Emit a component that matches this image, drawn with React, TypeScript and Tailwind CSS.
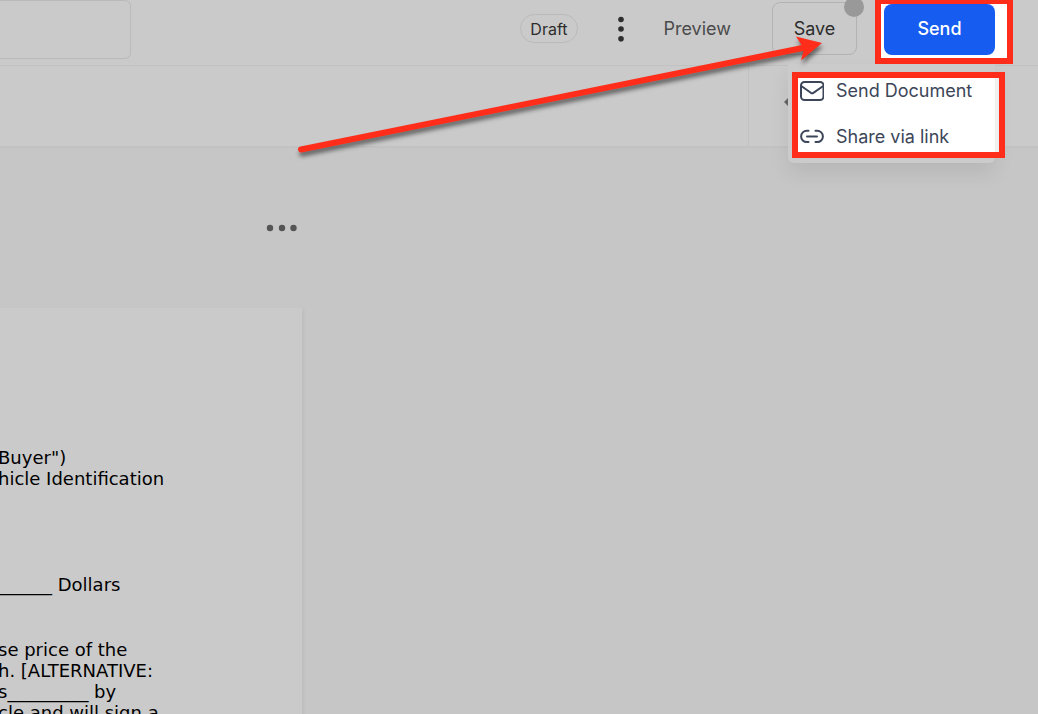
const clauses = [
  { lines: ['Buyer")', "hicle Identification"], spacing: "mb-[85px]" },
  { lines: ["______ Dollars"], spacing: "mb-11" },
  {
    lines: ["se price of the", "h. [ALTERNATIVE:", "s_________ by", "cle and will sign a"],
    spacing: "",
  },
];

function MailIcon() {
  return (
    <svg className="w-6 h-5 shrink-0" viewBox="0 0 24 20" fill="none" stroke="currentColor" strokeWidth="2" strokeLinecap="round" strokeLinejoin="round">
      <rect x="1" y="1" width="22.500" height="18" rx="3.500" />
      <path d="M2 5.500l8.800 6.300c.9.600 1.700.600 2.600 0L22.500 5.500" />
    </svg>
  );
}

function LinkIcon() {
  return (
    <svg className="w-6 h-5 shrink-0" viewBox="0 0 24 20" fill="none" stroke="currentColor" strokeWidth="2" strokeLinecap="round">
      <path d="M8.500 3.700H6.800a5.600 5.600 0 0 0 0 11.400H8.500M15.500 3.700h1.700a5.600 5.600 0 0 1 0 11.400H15.500M7 9.400h10" />
    </svg>
  );
}

const shareOptions = [
  { icon: MailIcon, label: "Send Document" },
  { icon: LinkIcon, label: "Share via link" },
];

function ShareMenu() {
  return (
    <div className="absolute right-[43px] top-16 w-[207px] pl-1 pt-2 pb-[5px] rounded-b-md bg-[#cbcbcb] shadow-[0_10px_20px_rgba(0,0,0,0.08)]">
      <div className="-mr-[10px] border-[6px] border-[#ff2d1a]">
        <ul className="flex flex-col gap-5 pl-0.5 pb-0.5 bg-white border-r-4 border-[#f0f0f0]">
          {shareOptions.map((option) => (
            <li key={option.label}>
              <button className="flex items-center gap-3 w-full h-[26px] text-lg text-[#3c4658] whitespace-nowrap">
                <option.icon />
                {option.label}
              </button>
            </li>
          ))}
        </ul>
      </div>
    </div>
  );
}

function Arrow() {
  return (
    <svg className="absolute right-[208px] top-[30px] w-[540px] h-[136px] pointer-events-none" viewBox="0 0 540 136" fill="#ff2d1a">
      <g className="drop-shadow-[1px_4px_2px_rgba(0,0,0,0.5)]">
        <path d="M11 119.500L515 17.500" stroke="#ff2d1a" strokeWidth="6" strokeLinecap="round" />
        <path d="M532 13L506 6.500L514 19L511 30.500z" />
      </g>
    </svg>
  );
}

export default function App() {
  return (
    <div className="relative flex flex-col min-h-screen overflow-hidden bg-[#c6c6c6] font-['Inter',sans-serif]">
      {/* Header */}
      <header className="flex items-start justify-between h-[66px] bg-[#cacaca] border-b border-[#c1c1c1]">
        <div className="w-[131px] h-[59px] rounded-r-md border border-l-0 border-[#bababa]" />
        <div className="flex items-start pr-[25px]">
          <div className="flex items-center h-[57px]">
            <span className="flex items-center h-[29px] px-[9px] rounded-full border border-[#bababa] text-base text-[#2d2d2d]">Draft</span>
            <button aria-label="More options" className="ml-[27px] text-[#2d2d2d]">
              <svg className="w-8 h-8" viewBox="0 0 32 32" fill="currentColor">
                <circle cx="16" cy="6.500" r="2.800" />
                <circle cx="16" cy="16" r="2.800" />
                <circle cx="16" cy="25.800" r="2.800" />
              </svg>
            </button>
            <button className="ml-[27px] text-lg text-[#4a4a4a]">Preview</button>
            <div className="relative ml-[41px]">
              <button className="block w-[85px] h-[53px] rounded-lg border border-[#b3b3b3] text-lg text-[#2d2d2d]">Save</button>
              <span className="absolute -right-[7px] -top-[5px] w-5 h-5 rounded-full bg-[#999999]" />
            </div>
          </div>
          <div className="ml-[18px] pl-[3px] pr-3 pb-[3px] bg-white border-[6px] border-t-4 border-[#ff2d1a]">
            <button className="block w-[111px] h-[51px] pb-0.5 rounded-lg bg-[#175cf0] text-lg font-medium text-white">Send</button>
          </div>
        </div>
      </header>

      {/* Toolbar */}
      <div className="flex justify-end h-[82px] bg-[#cacaca] border-b-2 border-[#c2c2c2]">
        <div className="flex items-center w-[290px] pl-[35px] pb-2 border-l border-[#c1c1c1]">
          <svg className="w-[5px] h-[10px]" viewBox="0 0 5 10" fill="#666666">
            <path d="M5 0v10L0 5z" />
          </svg>
        </div>
      </div>

      {/* Document */}
      <main className="flex flex-1 flex-col w-[302px] pt-[68px]">
        <button aria-label="Page options" className="self-end mr-1 text-[#555555]">
          <svg className="w-8 h-6" viewBox="0 0 32 24" fill="currentColor">
            <circle cx="4" cy="12" r="3.200" />
            <circle cx="16" cy="12" r="3.200" />
            <circle cx="27.500" cy="12" r="3.200" />
          </svg>
        </button>
        <article className="flex-1 h-0 mt-[68px] pt-[139px] bg-[#cacaca] shadow-[2px_1px_3px_rgba(0,0,0,0.04)] font-['DejaVu_Sans',sans-serif] text-lg leading-[21px] text-black">
          {clauses.map((clause, idx) => (
            <p key={idx} className={`-ml-0.5 whitespace-nowrap ${clause.spacing}`}>
              {clause.lines.map((line) => (
                <span key={line} className="block">{line}</span>
              ))}
            </p>
          ))}
        </article>
      </main>

      <ShareMenu />
      <Arrow />
    </div>
  );
}
